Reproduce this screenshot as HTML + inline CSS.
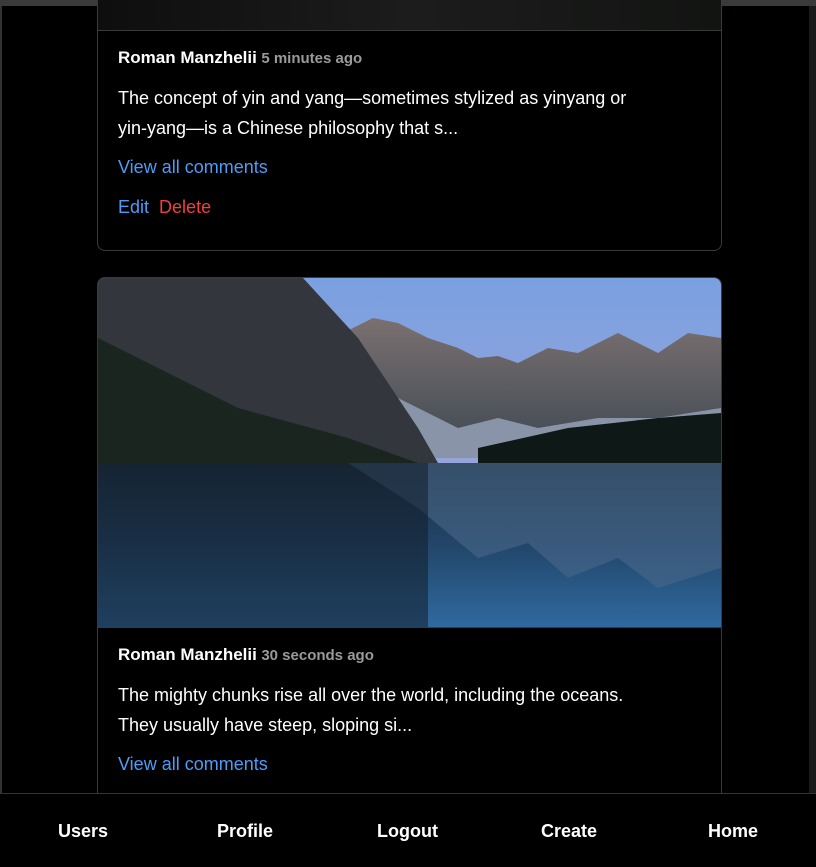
<!DOCTYPE html>
<html><head><style>
*{box-sizing:border-box;margin:0;padding:0}
body{width:816px;height:867px;background:#000;overflow:hidden;position:relative;font-family:"Liberation Sans",sans-serif;color:#fff}
.top{position:absolute;left:0;top:0;width:816px;height:6px;background:#3a3a3a}
.lb{position:absolute;left:0;top:6px;width:2px;height:861px;background:#333}
.rb{position:absolute;left:809px;top:6px;width:7px;height:861px;background:#1a1a1a}
.card{position:absolute;left:97px;width:625px;border:1px solid #3a3a3a;border-radius:8px;overflow:hidden;background:#000}
.name{font-weight:bold;font-size:17px}
.ago{color:#9a9a9a;font-size:15px;font-weight:bold}
.txt{font-size:18px;line-height:30px;margin-top:15px;width:575px}
.link{color:#4d9cf7;font-size:18px}
.foot{position:absolute;left:0;top:793px;width:816px;height:74px;background:#000;border-top:1px solid #333}
.foot span{position:absolute;top:27px;font-weight:bold;font-size:18px}
</style></head><body>
<div class="top"></div><div class="lb"></div><div class="rb"></div>
<div class="card" style="top:-10px;height:261px;border-top:none">
 <div style="height:41px;background:linear-gradient(90deg,#0e0e0e,#1c1c1c 50%,#121412);border-bottom:1px solid #3a3a3a"></div>
 <div style="padding:17px 20px">
  <div><span class="name">Roman Manzhelii</span> <span class="ago">5 minutes ago</span></div>
  <div class="txt">The concept of yin and yang—sometimes stylized as yinyang or<br>yin&#8209;yang—is a Chinese philosophy that s...</div>
  <div class="link" style="margin-top:14px">View all comments</div>
  <div style="margin-top:19px;font-size:18px"><span style="color:#4d9cf7">Edit</span>&nbsp; <span style="color:#f04040">Delete</span></div>
 </div>
</div>
<div class="card" style="top:277px;height:540px">
 <svg width="623" height="350" style="display:block;border-bottom:1px solid #3a3a3a">
  <defs>
   <linearGradient id="sky" x1="0" y1="0" x2="0" y2="1"><stop offset="0" stop-color="#7aa0e0"/><stop offset="1" stop-color="#b0a8d8"/></linearGradient>
   <linearGradient id="wat" x1="0" y1="0" x2="0" y2="1"><stop offset="0" stop-color="#1a2c3c"/><stop offset="0.5" stop-color="#22466a"/><stop offset="1" stop-color="#2f6aa0"/></linearGradient>
   <linearGradient id="mt" x1="0" y1="0" x2="0" y2="1"><stop offset="0" stop-color="#7a7070"/><stop offset="1" stop-color="#4a5058"/></linearGradient>
  </defs>
  <rect width="623" height="350" fill="url(#sky)"/>
  <polygon points="245,55 275,40 300,45 330,60 360,70 380,80 400,78 420,85 450,70 480,75 520,55 560,75 590,55 623,60 623,150 245,150" fill="url(#mt)"/>
  <polygon points="300,120 360,150 400,140 440,150 500,140 560,140 623,130 623,180 300,180" fill="#8a94a8"/>
  <polygon points="0,0 205,0 260,60 320,150 340,185 0,185" fill="#33363c"/>
  <polygon points="0,60 60,90 140,130 250,160 320,185 0,190" fill="#1a2520"/>
  <polygon points="380,170 470,150 560,140 623,135 623,190 380,190" fill="#0e1816"/>
  <rect y="185" width="623" height="165" fill="url(#wat)"/>
  <polygon points="250,185 320,230 380,280 430,265 470,300 520,280 560,310 623,290 623,185" fill="#4a6888" opacity="0.6"/>
  <rect y="185" width="330" height="165" fill="#121e2a" opacity="0.55"/>
 </svg>
 <div style="padding:17px 20px">
  <div><span class="name">Roman Manzhelii</span> <span class="ago">30 seconds ago</span></div>
  <div class="txt">The mighty chunks rise all over the world, including the oceans.<br>They usually have steep, sloping si...</div>
  <div class="link" style="margin-top:14px">View all comments</div>
 </div>
</div>
<div class="foot">
 <span style="left:58px">Users</span><span style="left:217px">Profile</span><span style="left:377px">Logout</span><span style="left:541px">Create</span><span style="left:708px">Home</span>
</div>
</body></html>
